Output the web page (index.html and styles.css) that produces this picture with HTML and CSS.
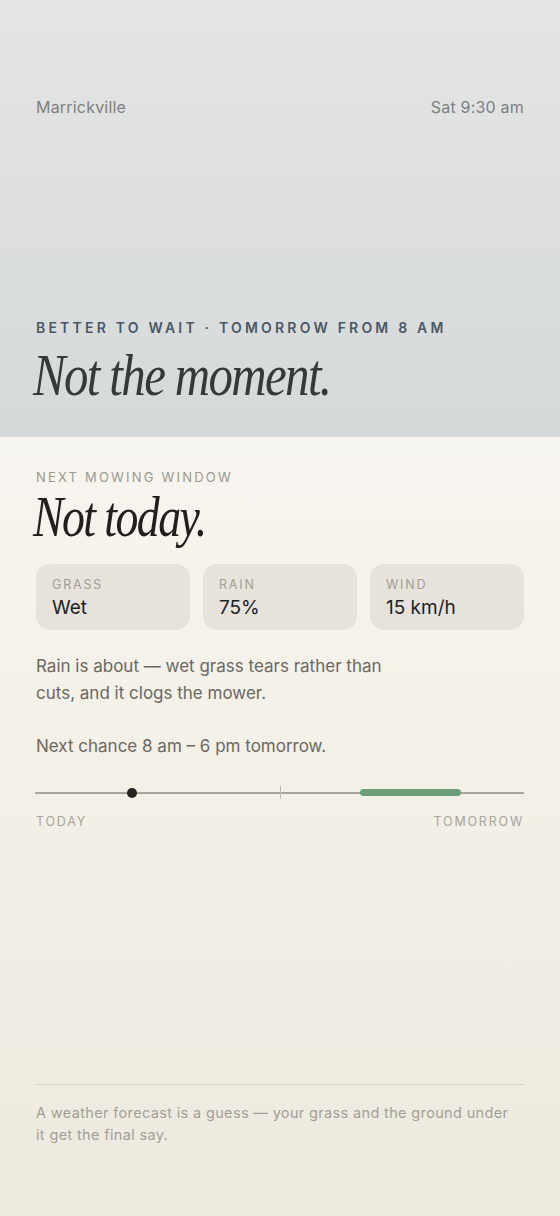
FILE: index.html
```html
<!DOCTYPE html>
<html lang="en">
  <head>
    <meta charset="UTF-8" />
    <meta name="viewport" content="width=device-width, initial-scale=1.0" />
    <title>Mowing window</title>
    <link rel="stylesheet" href="styles.css">
  </head>
  <body>
    <div class="sky">
      <div class="topbar">
        <span>Marrickville</span>
        <span>Sat 9:30 am</span>
      </div>
      <div class="verdict">
        <p class="kicker">Better to wait · Tomorrow from 8 am</p>
        <h1>Not the moment.</h1>
      </div>
    </div>

    <div class="ground">
      <p class="label">Next mowing window</p>
      <h2>Not today.</h2>

      <div class="stats">
        <div class="stat">
          <span class="stat-label">Grass</span>
          <span class="stat-value">Wet</span>
        </div>
        <div class="stat">
          <span class="stat-label">Rain</span>
          <span class="stat-value">75%</span>
        </div>
        <div class="stat">
          <span class="stat-label">Wind</span>
          <span class="stat-value">15 km/h</span>
        </div>
      </div>

      <p class="reason">Rain is about — wet grass tears rather than cuts, and it clogs the mower.</p>
      <p class="reason">Next chance 8 am – 6 pm tomorrow.</p>

      <div class="timeline">
        <div class="track">
          <span class="now" style="left: 19.8%"></span>
          <span class="midnight"></span>
          <span class="window" style="left: 66.5%; width: 20.6%"></span>
        </div>
        <div class="timeline-labels">
          <span>Today</span>
          <span>Tomorrow</span>
        </div>
      </div>

      <div class="spacer"></div>

      <p class="note">A weather forecast is a guess — your grass and the ground under it get the final say.</p>
    </div>
  </body>
</html>
```

FILE: styles.css
```css
html,
body {
  margin: 0;
  height: 100%;
}
body {
  font-family: Inter, "Noto Sans", sans-serif;
  background: #eeeadf;
  display: flex;
  flex-direction: column;
}
.sky {
  height: 437px;
  box-sizing: border-box;
  padding: 97px 36px 0;
  background: linear-gradient(#e4e5e5, #d6d9d9);
  border-bottom: 1px solid #e0ded8;
  display: flex;
  flex-direction: column;
}
.topbar {
  display: flex;
  justify-content: space-between;
  font-size: 16px;
  letter-spacing: 0.2px;
  color: #7d7f80;
}
.verdict {
  margin-top: auto;
  padding-bottom: 30px;
}
.kicker {
  margin: 0 0 8px;
  font-size: 14px;
  font-weight: 600;
  letter-spacing: 3.2px;
  text-transform: uppercase;
  color: #4b5766;
}
h1,
h2 {
  margin: 0;
  font-family: "Liberation Serif", serif;
  font-style: italic;
  font-weight: 400;
  letter-spacing: -2px;
  transform-origin: left center;
}
h1 {
  font-size: 60px;
  line-height: 62px;
  color: #343a38;
  margin-left: -3px;
  transform: scaleX(0.815);
}
.ground {
  flex: 1;
  padding: 32px 36px 70px;
  background: linear-gradient(#f7f5ef, #ede9de);
  display: flex;
  flex-direction: column;
}
.label {
  margin: 0;
  font-size: 13px;
  letter-spacing: 2.2px;
  text-transform: uppercase;
  color: #9c9891;
}
h2 {
  font-size: 58px;
  line-height: 62px;
  color: #22201d;
  margin: 1px 0 16px -3px;
  transform: scaleX(0.79);
}
.stats {
  display: grid;
  grid-template-columns: repeat(3, 1fr);
  gap: 13px;
}
.stat {
  background: #e7e3dc;
  border-radius: 14px;
  padding: 13px 16px 11px;
  display: flex;
  flex-direction: column;
  gap: 4px;
}
.stat-label {
  font-size: 12.5px;
  letter-spacing: 1.8px;
  text-transform: uppercase;
  color: #a29d96;
}
.stat-value {
  font-size: 19px;
  color: #23211e;
}
.reason {
  margin: 23px 0 0;
  max-width: 380px;
  font-size: 17px;
  line-height: 27px;
  color: #6c6761;
}
.reason + .reason {
  margin-top: 26px;
}
.timeline {
  margin-top: 32px;
}
.track {
  position: relative;
  height: 2px;
  margin-left: -1px;
  background: #aaa697;
}
.now {
  position: absolute;
  top: -4px;
  width: 10px;
  height: 10px;
  margin-left: -5px;
  border-radius: 50%;
  background: #25231f;
}
.midnight {
  position: absolute;
  left: 50%;
  top: -6px;
  width: 1px;
  height: 13px;
  background: #bdb9ad;
}
.window {
  position: absolute;
  top: -3px;
  height: 7px;
  border-radius: 4px;
  background: #6b9e79;
}
.timeline-labels {
  display: flex;
  justify-content: space-between;
  margin-top: 20px;
  font-size: 12.5px;
  letter-spacing: 1.8px;
  text-transform: uppercase;
  color: #a9a49c;
}
.spacer {
  flex: 1;
}
.note {
  margin: 0;
  padding: 17px 6px 0 0;
  border-top: 1px solid #d6d1c7;
  font-size: 14.5px;
  line-height: 22px;
  letter-spacing: 0.35px;
  color: #a39e96;
}
```
